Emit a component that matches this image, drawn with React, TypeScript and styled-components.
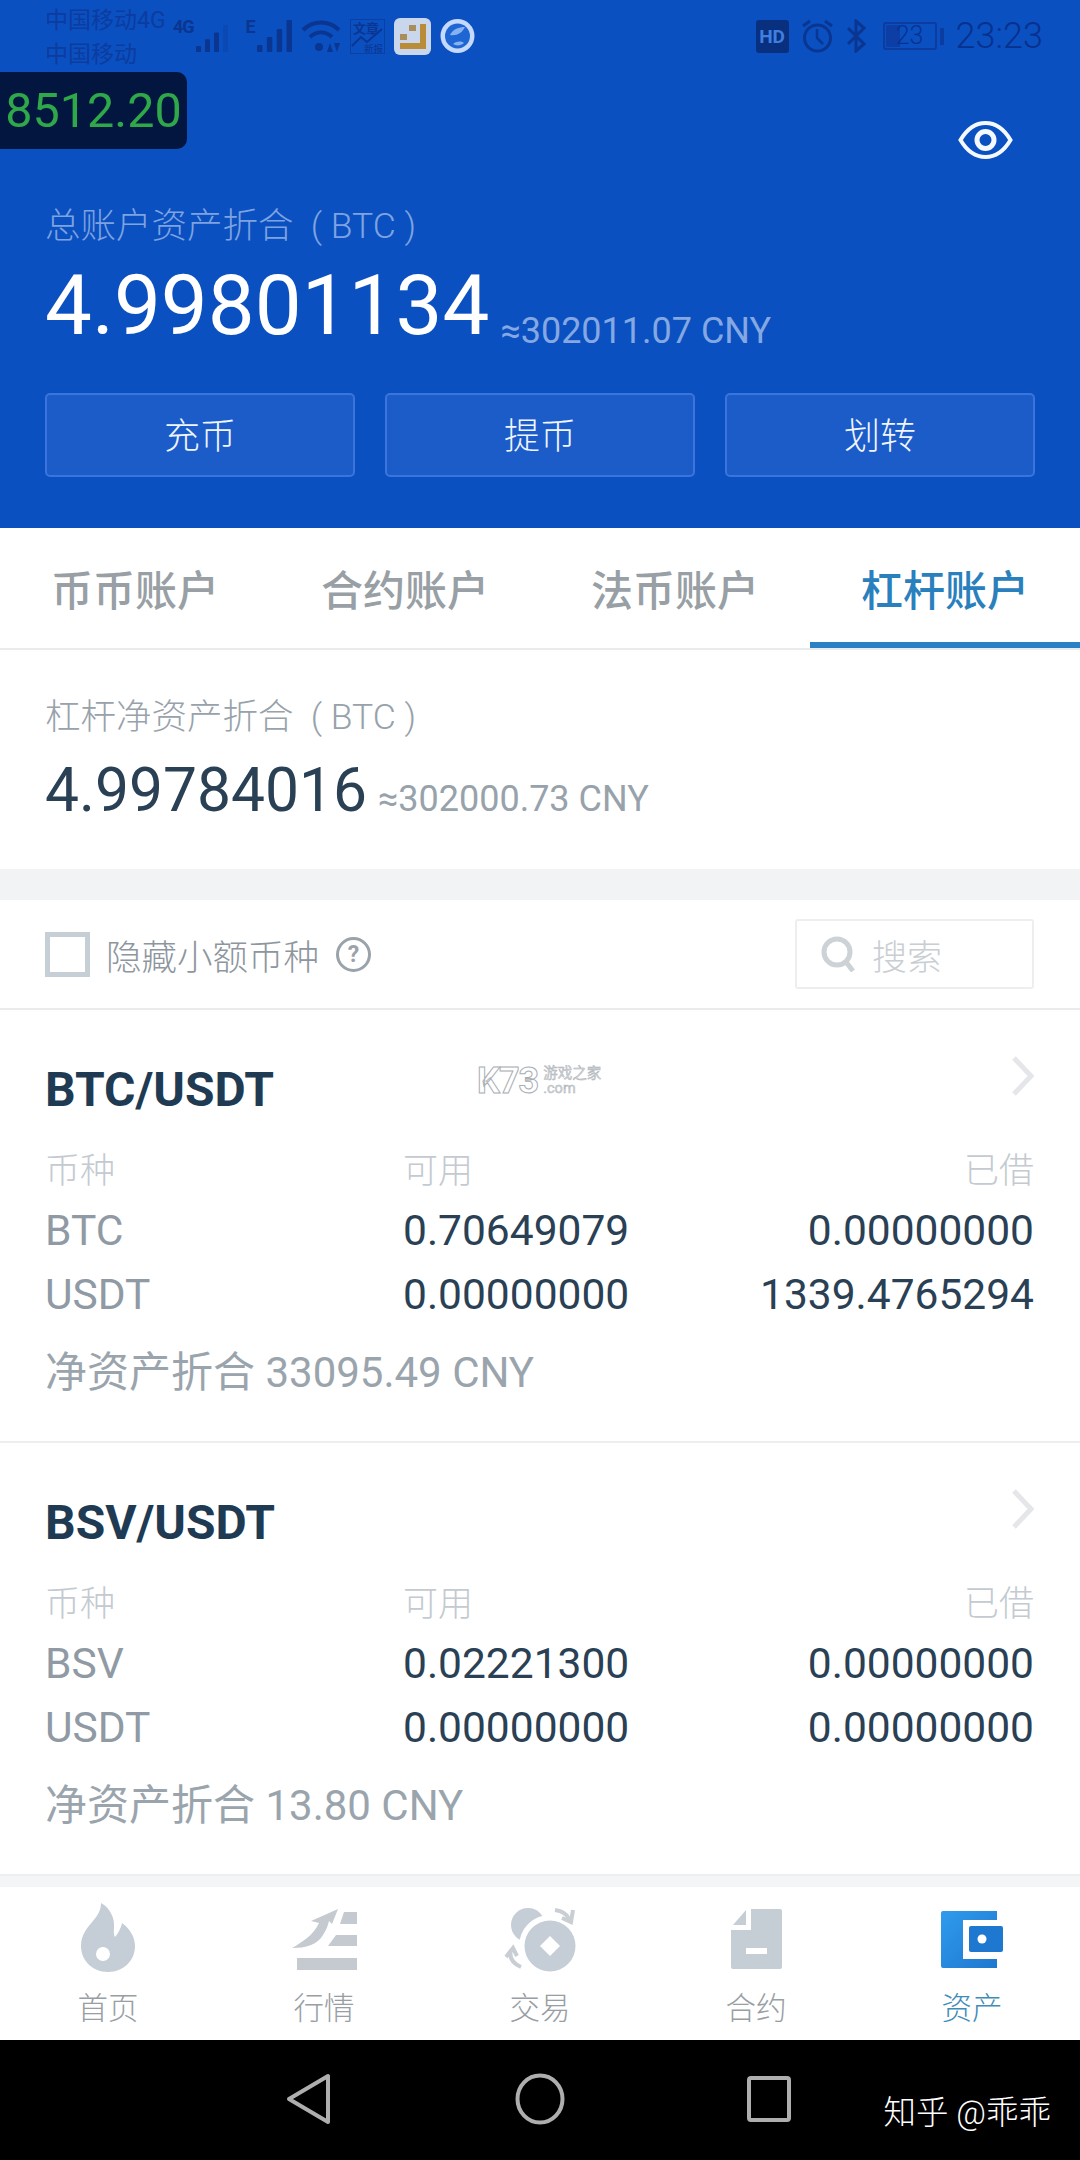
import styled, { createGlobalStyle } from 'styled-components'

const GlobalStyle = createGlobalStyle`
  html, body {
    margin: 0;
    padding: 0;
    background: #fff;
  }
  * {
    box-sizing: border-box;
  }
  body {
    font-family: Roboto, "Noto Sans CJK SC", sans-serif;
  }
`

const Page = styled.div`
  width: 1080px;
  height: 2160px;
  display: flex;
  flex-direction: column;
  overflow: hidden;
  position: relative;
`

const Header = styled.header`
  background: #0a50c1;
  height: 528px;
  flex: none;
  position: relative;
`

const StatusBar = styled.div`
  height: 72px;
  display: flex;
  align-items: center;
  padding: 0 37px 0 45px;
  color: #0c3c9f;
`

const Carrier = styled.div`
  width: 128px;
  padding-top: 4px;
  font-size: 23px;
  line-height: 34px;
  white-space: nowrap;
`

const StatusGroup = styled.div`
  display: flex;
  align-items: center;
  gap: 9px;
`

const StatusRight = styled(StatusGroup)`
  margin-left: auto;
  gap: 12px;
`

const Clock = styled.span`
  font-size: 36px;
  font-weight: 300;
  color: #08318e;
`

const Ticker = styled.div`
  position: absolute;
  left: 0;
  top: 72px;
  width: 187px;
  height: 77px;
  border-radius: 0 10px 10px 0;
  background: #03163f;
  color: #2fa84a;
  font-size: 48.5px;
  line-height: 77px;
  text-align: center;
`

const EyeRow = styled.div`
  display: flex;
  justify-content: flex-end;
  padding: 48px 67px 0 0;
  height: 86px;
`

const Balance = styled.div`
  padding: 44px 45px 0;
`

const BalanceLabel = styled.div`
  font-size: 35.5px;
  line-height: 48px;
  color: #7ea3e0;
  font-weight: 300;
`

const BalanceRow = styled.div`
  display: flex;
  align-items: flex-end;
  gap: 11px;
  margin-top: 11px;
`

const BalanceValue = styled.span`
  font-size: 83.5px;
  line-height: 90px;
  color: #fff;
`

const BalanceFiat = styled.span`
  font-size: 36px;
  line-height: 40px;
  color: #85a8e2;
`

const ActionRow = styled.div`
  display: grid;
  grid-template-columns: repeat(3, 310px);
  justify-content: space-between;
  margin-top: 42px;
`

const ActionButton = styled.div`
  height: 84px;
  display: flex;
  align-items: center;
  justify-content: center;
  padding-bottom: 4px;
  background: #1c5cc8;
  border: 2px solid #3a74dc;
  border-radius: 5px;
  color: #f0f5ff;
  font-size: 36px;
  font-weight: 300;
`

const Tabs = styled.nav`
  display: grid;
  grid-template-columns: repeat(4, 1fr);
  height: 122px;
  flex: none;
  border-bottom: 2px solid #e9ebed;
`

const Tab = styled.div<{ $active?: boolean }>`
  display: flex;
  align-items: center;
  justify-content: center;
  height: 120px;
  padding-top: 4px;
  font-size: 42px;
  font-weight: 500;
  color: ${p => (p.$active ? '#2a80bd' : '#989fa5')};
  border-bottom: 6px solid ${p => (p.$active ? '#2a80c4' : 'transparent')};
`

const Summary = styled.section`
  flex: none;
  height: 219px;
  padding: 43px 45px 0;
`

const SummaryLabel = styled.div`
  font-size: 35.5px;
  line-height: 48px;
  color: #97a2ab;
  font-weight: 300;
`

const SummaryRow = styled.div`
  display: flex;
  align-items: baseline;
  gap: 11px;
  margin-top: 15px;
`

const SummaryValue = styled.span`
  font-size: 60.5px;
  line-height: 70px;
  color: #2a4054;
`

const SummaryFiat = styled.span`
  font-size: 36px;
  color: #97a2ab;
`

const Band = styled.div`
  flex: none;
  height: 31px;
  background: #f1f3f5;
`

const Toolbar = styled.div`
  flex: none;
  height: 110px;
  display: flex;
  align-items: center;
  padding: 0 46px 0 45px;
  border-bottom: 2px solid #e9ebed;
`

const CheckBox = styled.span`
  width: 45px;
  height: 45px;
  border: 5px solid #c6ced6;
  margin-right: 16px;
`

const ToolbarText = styled.span`
  font-size: 35.5px;
  font-weight: 300;
  color: #8d969e;
`

const HelpMark = styled.span`
  width: 35px;
  height: 35px;
  margin-left: 17px;
  border: 3px solid #9aa3aa;
  border-radius: 50%;
  display: flex;
  align-items: center;
  justify-content: center;
  font-size: 23px;
  font-weight: 700;
  color: #9aa3aa;
`

const SearchBox = styled.div`
  margin-left: auto;
  width: 239px;
  height: 70px;
  display: flex;
  align-items: center;
  gap: 16px;
  padding-left: 24px;
  border: 2px solid #eceef0;
  border-radius: 3px;
  font-size: 35px;
  font-weight: 300;
  color: #c9ced3;
`

const List = styled.div`
  flex: 1;
  min-height: 0;
  overflow: hidden;
`

const Card = styled.article`
  position: relative;
  height: 433px;
  padding: 50px 46px 0 45px;
  border-bottom: 2px solid #eceef0;
`

const CardHead = styled.div`
  display: flex;
  justify-content: space-between;
  align-items: flex-start;
`

const Pair = styled.div`
  font-size: 48px;
  line-height: 60px;
  font-weight: 700;
  color: #1f3b53;
`

const Chevron = styled.svg`
  width: 23px;
  height: 40px;
  margin-top: -4px;
`

const Watermark = styled.div`
  position: absolute;
  left: 477px;
  top: 56px;
  display: flex;
  align-items: center;
  gap: 5px;
  color: #fff;
  -webkit-text-stroke: 1px #a9aeb3;
`

const WatermarkMark = styled.span`
  font-size: 36px;
  line-height: 30px;
  letter-spacing: -1px;
  font-weight: 700;
`

const WatermarkSmall = styled.span`
  display: flex;
  flex-direction: column;
  font-size: 14.5px;
  line-height: 15px;
  -webkit-text-stroke: 0.4px #a9aeb3;
  color: #d0d4d8;
`

const Grid = styled.div`
  display: grid;
  grid-template-columns: 358px 1fr auto;
  margin-top: 19px;
`

const Cell = styled.div<{ $head?: boolean; $first?: boolean; $end?: boolean }>`
  height: ${p => (p.$head ? '60px' : '64px')};
  line-height: ${p => (p.$head ? '66px' : '64px')};
  font-size: ${p => (p.$head ? '35px' : '42.5px')};
  font-weight: ${p => (p.$head ? 300 : 400)};
  color: ${p => (p.$head ? '#c3cad0' : p.$first ? '#8f9aa4' : '#2a4054')};
  text-align: ${p => (p.$end ? 'right' : 'left')};
`

const NetValue = styled.div`
  margin-top: 16px;
  font-size: 42px;
  line-height: 60px;
  color: #9aa4ad;
`

const TabBar = styled.nav`
  flex: none;
  height: 164px;
  display: grid;
  grid-template-columns: repeat(5, 1fr);
  background: #fff;
  border-top: 11px solid #f4f5f6;
`

const TabBarItem = styled.div<{ $active?: boolean }>`
  display: flex;
  flex-direction: column;
  align-items: center;
  font-size: 30.5px;
  font-weight: 300;
  color: ${p => (p.$active ? '#3f8cb8' : '#989ea4')};
`

const TabIconSlot = styled.div`
  height: 86px;
  display: flex;
  align-items: flex-end;
  justify-content: center;
  margin-bottom: 11px;
`

const SystemBar = styled.div`
  flex: none;
  height: 120px;
  background: #000;
  position: relative;
  display: flex;
  align-items: center;
  padding: 0 289px 2px 286px;
  justify-content: space-between;
`

const Credit = styled.div`
  position: absolute;
  right: 29px;
  top: 51px;
  font-size: 32.5px;
  line-height: 44px;
  color: #fff;
  font-weight: 300;
`

const SignalBars = ({ w, h, dim }: { w: number; h: number; dim?: boolean }) => (
  <svg width={w} height={h} viewBox="0 0 32 32" preserveAspectRatio="none" fill="#0a3590">
    <rect x="0" y="25" width="5" height="7" rx="1" />
    <rect x="9" y="17" width="5" height="15" rx="1" />
    <rect x="18" y="9" width="5" height="23" rx="1" />
    <rect x="27" y="0" width="5" height="32" rx="1" opacity={dim ? 0.25 : 1} />
  </svg>
)

const NetTag = styled.span`
  font-size: 18px;
  line-height: 14px;
  font-weight: 700;
  letter-spacing: -1px;
  color: #0a3590;
  align-self: flex-start;
`

const SignalPair = styled.span<{ $tail?: boolean }>`
  display: flex;
  align-items: flex-end;
  height: 32px;
  gap: 2px;
  margin-right: ${p => (p.$tail ? '9px' : '0')};
`

const WifiIcon = () => (
  <svg width="40" height="32" viewBox="0 0 40 32" fill="none" stroke="#0a3590" strokeWidth="4">
    <path d="M2 10c10-10 26-10 36 0" />
    <path d="M9 17c7-6 15-6 22 0" />
    <circle cx="18" cy="27" r="4" fill="#0a3590" stroke="none" />
    <path d="M29 23l-3 9h6zM36 32l-3-9h6z" fill="#0a3590" stroke="none" />
  </svg>
)

const ChartTile = () => (
  <svg width="35" height="35" viewBox="0 0 35 35" fill="none" stroke="#0a3590">
    <rect x="0.5" y="0.5" width="34" height="34" strokeOpacity="0.6" />
    <text x="3" y="14" fontSize="13" fontWeight="700" fill="#0a3590" stroke="none">文章</text>
    <path d="M2 27l9-9 6 5 15-13" strokeWidth="2" />
    <text x="14" y="33" fontSize="9.5" fill="#0a3590" stroke="none">新报</text>
  </svg>
)

const BrownTile = () => (
  <svg width="37" height="37" viewBox="0 0 37 37">
    <rect width="37" height="37" rx="6" fill="#c9d6ec" />
    <path d="M26 6h6v25H6v-6h20z" fill="#b98c38" />
    <rect x="15" y="7" width="7" height="6" fill="#a98d5a" />
    <rect x="6" y="16" width="7" height="6" fill="#a98d5a" />
  </svg>
)

const GlobeBadge = () => (
  <svg width="35" height="36" viewBox="0 0 35 36">
    <circle cx="17.5" cy="18" r="17" fill="#c4d9fb" />
    <circle cx="17.5" cy="18" r="12.5" fill="#1e66d3" />
    <path d="M10 17c3-6 9-8 15-8-3 6-8 9-15 8zM13 26c4-3 8-3 11-1-3 3-8 3-11 1z" fill="#87b2f0" />
  </svg>
)

const HdBadge = styled.span`
  width: 33px;
  height: 33px;
  border-radius: 3px;
  background: #08307f;
  color: #3f7fe0;
  font-size: 19px;
  font-weight: 700;
  display: flex;
  align-items: center;
  justify-content: center;
`

const AlarmIcon = () => (
  <svg width="33" height="34" viewBox="0 0 33 34" fill="none" stroke="#0a3590" strokeWidth="3">
    <circle cx="16.5" cy="19" r="13" />
    <path d="M16 10v9l6 6" strokeWidth="2.5" />
    <path d="M2 7l7-5M31 7l-7-5" />
  </svg>
)

const BluetoothIcon = () => (
  <svg width="21" height="34" viewBox="0 0 21 34" fill="none" stroke="#0a3590" strokeWidth="3">
    <path d="M2 9l16 16-8 7V2l8 7L2 25" />
  </svg>
)

const BatteryShell = styled.span`
  position: relative;
  width: 54px;
  height: 28px;
  margin: 0 7px 0 4px;
  border: 2px solid #0c3c9f;
  border-radius: 3px;
  font-size: 25px;
  line-height: 24px;
  font-weight: 300;
  text-align: center;
  color: #08318e;
  &::before {
    content: '';
    position: absolute;
    left: 1px;
    top: 1px;
    bottom: 1px;
    width: 14px;
    background: #0c3ea6;
  }
  &::after {
    content: '';
    position: absolute;
    right: -9px;
    top: 4px;
    width: 4px;
    height: 17px;
    background: #0c3c9f;
  }
`

const BatteryDigits = styled.span`
  position: relative;
`

const EyeIcon = () => (
  <svg width="55" height="40" viewBox="0 0 55 40" fill="none" stroke="#f4f8ff">
    <path d="M2.5 20C9 9 17 3 27.5 3S46 9 52.5 20C46 31 38 37 27.5 37S9 31 2.5 20z" strokeWidth="4" />
    <circle cx="27.5" cy="20" r="8.5" strokeWidth="5" />
  </svg>
)

const SearchIcon = () => (
  <svg width="35" height="36" viewBox="0 0 35 36" fill="none" stroke="#cdd2d6" strokeWidth="5">
    <circle cx="16" cy="16" r="13" />
    <path d="M25 26l7 9" />
  </svg>
)

// tab bar icons keep some blank room below the drawing so they sit on different baselines
const FlameIcon = () => (
  <svg width="54" height="70" viewBox="0 0 54 70" fill="#c5cdd6">
    <path
      fillRule="evenodd"
      d="M20 0c9 5 14 15 13 25-.3 4-.5 7 1 9 3-3 6-9 7-14 8 6 13 14 13 23 0 15-12 26-27 26S0 58 0 43C0 32 6 25 12 18 17 12 20 7 20 0zM22 44a7 7 0 1 0 0 14 7 7 0 0 0 0-14z"
    />
  </svg>
)

const MarketIcon = () => (
  <svg width="65" height="64" viewBox="0 0 65 64" fill="#c5cad1">
    <path d="M5 49h60v12H5zM44 26h21v11H36zM52 3h13v12H48z" />
    <path d="M46 0L19 12l8 2C22 25 11 33 0 39c14 0 25-3 31-13 3-5 5-9 6-14l3 3z" />
  </svg>
)

const TradeIcon = () => (
  <svg width="72" height="66" viewBox="0 0 72 66" fill="#c5cdd6">
    <circle cx="24" cy="18" r="17" />
    <circle cx="46" cy="39" r="31" fill="#fff" />
    <circle cx="46" cy="39" r="25.5" />
    <path d="M46 29l10 10-10 10-10-10z" fill="#fff" />
    <path d="M51 3c7 1 12 4 14 9M69 3l-2 12-9-4" fill="none" stroke="#c9ced4" strokeWidth="4" />
    <path d="M7 43c-2 7 1 13 10 17M2 50l7-9 4 8" fill="none" stroke="#c9ced4" strokeWidth="4" />
  </svg>
)

const ContractIcon = () => (
  <svg width="51" height="64" viewBox="0 0 51 64" fill="#c5cdd5">
    <path d="M2 16L15 1v15z" />
    <path
      fillRule="evenodd"
      d="M20 0h29a2 2 0 0 1 2 2v56a2 2 0 0 1-2 2H2a2 2 0 0 1-2-2V21h20zM15 39v6h21v-6z"
    />
  </svg>
)

const WalletIcon = () => (
  <svg width="62" height="62" viewBox="0 0 62 62">
    <defs>
      <linearGradient id="walletFill" x1="0" y1="0" x2="1" y2="1">
        <stop offset="0" stopColor="#2f9bec" />
        <stop offset="1" stopColor="#1e78cf" />
      </linearGradient>
    </defs>
    <path d="M2 0h54v9H22v39h34v9H2a2 2 0 0 1-2-2V2a2 2 0 0 1 2-2z" fill="url(#walletFill)" />
    <rect x="28" y="15" width="34" height="26" rx="2" fill="#1f78cf" />
    <circle cx="41" cy="28" r="4.5" fill="#fff" />
  </svg>
)

const BackIcon = () => (
  <svg width="46" height="52" viewBox="0 0 46 52" fill="none" stroke="#aeaeae" strokeWidth="4" strokeLinejoin="round">
    <path d="M42 3v46L3 26z" />
  </svg>
)

const HomeIcon = () => (
  <svg width="50" height="52" viewBox="0 0 50 52" fill="none" stroke="#aeaeae" strokeWidth="4">
    <ellipse cx="25" cy="26" rx="22.5" ry="23.5" />
  </svg>
)

const RecentIcon = () => (
  <svg width="44" height="46" viewBox="0 0 44 46" fill="none" stroke="#aeaeae" strokeWidth="4">
    <rect x="2" y="2" width="40" height="42" rx="2" />
  </svg>
)

const CARDS = [
  {
    pair: 'BTC/USDT',
    rows: [
      ['BTC', '0.70649079', '0.00000000'],
      ['USDT', '0.00000000', '1339.4765294'],
    ],
    net: '净资产折合 33095.49 CNY',
    mark: true,
  },
  {
    pair: 'BSV/USDT',
    rows: [
      ['BSV', '0.02221300', '0.00000000'],
      ['USDT', '0.00000000', '0.00000000'],
    ],
    net: '净资产折合 13.80 CNY',
    mark: false,
  },
]

const NAV_ITEMS = [
  { label: '首页', icon: <FlameIcon /> },
  { label: '行情', icon: <MarketIcon /> },
  { label: '交易', icon: <TradeIcon /> },
  { label: '合约', icon: <ContractIcon /> },
  { label: '资产', icon: <WalletIcon />, active: true },
]

const Row = ({ row }: { row: string[] }) => (
  <>
    <Cell $first>{row[0]}</Cell>
    <Cell>{row[1]}</Cell>
    <Cell $end>{row[2]}</Cell>
  </>
)

const App = () => {
  return (
    <Page>
      <GlobalStyle />
      <Header>
        <StatusBar>
          <Carrier>
            中国移动4G
            <br />
            中国移动
          </Carrier>
          <StatusGroup>
            <SignalPair $tail>
              <NetTag>4G</NetTag>
              <SignalBars w={32} h={27} dim />
            </SignalPair>
            <SignalPair>
              <NetTag>E</NetTag>
              <SignalBars w={35} h={32} />
            </SignalPair>
            <WifiIcon />
            <ChartTile />
            <BrownTile />
            <GlobeBadge />
          </StatusGroup>
          <StatusRight>
            <HdBadge>HD</HdBadge>
            <AlarmIcon />
            <BluetoothIcon />
            <BatteryShell>
              <BatteryDigits>23</BatteryDigits>
            </BatteryShell>
            <Clock>23:23</Clock>
          </StatusRight>
        </StatusBar>
        <Ticker>8512.20</Ticker>
        <EyeRow>
          <EyeIcon />
        </EyeRow>
        <Balance>
          <BalanceLabel>总账户资产折合&nbsp;&nbsp;( BTC )</BalanceLabel>
          <BalanceRow>
            <BalanceValue>4.99801134</BalanceValue>
            <BalanceFiat>≈302011.07 CNY</BalanceFiat>
          </BalanceRow>
          <ActionRow>
            <ActionButton>充币</ActionButton>
            <ActionButton>提币</ActionButton>
            <ActionButton>划转</ActionButton>
          </ActionRow>
        </Balance>
      </Header>

      <Tabs>
        <Tab>币币账户</Tab>
        <Tab>合约账户</Tab>
        <Tab>法币账户</Tab>
        <Tab $active>杠杆账户</Tab>
      </Tabs>

      <Summary>
        <SummaryLabel>杠杆净资产折合&nbsp;&nbsp;( BTC )</SummaryLabel>
        <SummaryRow>
          <SummaryValue>4.99784016</SummaryValue>
          <SummaryFiat>≈302000.73 CNY</SummaryFiat>
        </SummaryRow>
      </Summary>
      <Band />

      <Toolbar>
        <CheckBox />
        <ToolbarText>隐藏小额币种</ToolbarText>
        <HelpMark>?</HelpMark>
        <SearchBox>
          <SearchIcon />
          搜索
        </SearchBox>
      </Toolbar>

      <List>
        {CARDS.map(card => (
          <Card key={card.pair}>
            <CardHead>
              <Pair>{card.pair}</Pair>
              <Chevron viewBox="0 0 23 40" fill="none" stroke="#e4e6e9" strokeWidth="5">
                <path d="M3 2l17 18L3 38" />
              </Chevron>
            </CardHead>
            {card.mark && (
              <Watermark>
                <WatermarkMark>K73</WatermarkMark>
                <WatermarkSmall>
                  <span>游戏之家</span>
                  <span>.com</span>
                </WatermarkSmall>
              </Watermark>
            )}
            <Grid>
              <Cell $head>币种</Cell>
              <Cell $head>可用</Cell>
              <Cell $head $end>已借</Cell>
              {card.rows.map(row => (
                <Row key={row[0]} row={row} />
              ))}
            </Grid>
            <NetValue>{card.net}</NetValue>
          </Card>
        ))}
      </List>

      <TabBar>
        {NAV_ITEMS.map(item => (
          <TabBarItem key={item.label} $active={item.active}>
            <TabIconSlot>{item.icon}</TabIconSlot>
            {item.label}
          </TabBarItem>
        ))}
      </TabBar>

      <SystemBar>
        <BackIcon />
        <HomeIcon />
        <RecentIcon />
        <Credit>知乎 @乖乖</Credit>
      </SystemBar>
    </Page>
  )
}

export default App
